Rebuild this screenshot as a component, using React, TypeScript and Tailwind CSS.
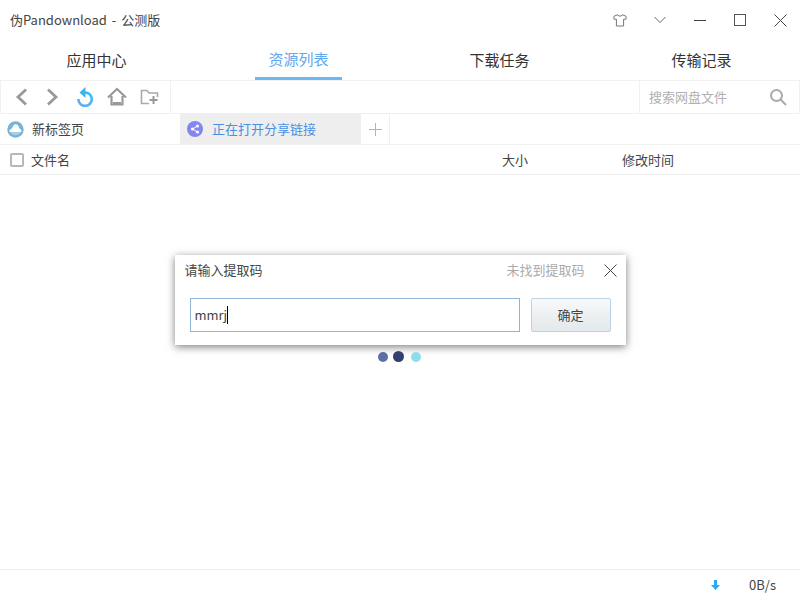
import React from "react";

function Tab({ label, active, className }: { label: string; active?: boolean; className?: string }) {
  return (
    <div className={`w-[87px] h-[40px] flex items-center justify-center text-[15px] ${active ? "text-[#60a8f0] border-b-[3px] border-[#6cb8f2] pt-[2px]" : "text-[#333]"} ${className ?? ""}`}>
      {label}
    </div>
  );
}

export default function App() {
  return (
    <div className="relative w-[800px] h-[600px] bg-white overflow-hidden text-[#333] font-['Noto_Sans_CJK_SC','Noto_Sans',sans-serif]">
      <div className="flex flex-col h-full">
        {/* Title bar */}
        <div className="h-[40px] flex items-center justify-between pl-[10px] shrink-0">
          <span className="text-[13px] text-[#444] [word-spacing:2px]">伪Pandownload - 公测版</span>
          <div className="flex items-center h-full">
            <div className="w-[40px] flex justify-center">
              <svg width="14" height="13" viewBox="0 0 14 13" fill="none" stroke="#777" strokeWidth="1">
                <path d="M4.8 0.8 L1 2.2 L0.9 5.2 L3.4 5.2 V12 H10.6 V5.2 L13.1 5.2 L13 2.2 L9.2 0.8 C8.8 2.6 5.2 2.6 4.8 0.8 Z" />
              </svg>
            </div>
            <div className="w-[40px] flex justify-center">
              <svg width="12" height="8" viewBox="0 0 12 8" fill="none" stroke="#666" strokeWidth="1"><path d="M0.5 1 L6 6.5 L11.5 1" /></svg>
            </div>
            <div className="w-[40px] flex justify-center">
              <div className="w-[12px] h-[1px] bg-[#444]" />
            </div>
            <div className="w-[40px] flex justify-center">
              <div className="w-[12px] h-[12px] border border-[#555]" />
            </div>
            <div className="w-[40px] flex justify-center">
              <svg width="13" height="13" viewBox="0 0 13 13" fill="none" stroke="#444" strokeWidth="1"><path d="M0.5 0.5 L12.5 12.5 M12.5 0.5 L0.5 12.5" /></svg>
            </div>
          </div>
        </div>

        {/* Main tabs */}
        <div className="h-[40px] flex shrink-0 pl-[53px]">
          <Tab label="应用中心" className="mr-[115px]" />
          <Tab label="资源列表" active className="mr-[114px]" />
          <Tab label="下载任务" className="mr-[115px]" />
          <Tab label="传输记录" />
        </div>

        {/* Toolbar */}
        <div className="h-[34px] flex items-stretch justify-between border-y border-[#f0f0f0] border-x shrink-0">
          <div className="w-[170px] border-r border-[#f0f0f0] flex items-center gap-[12px] pl-[10px]">
            <svg width="20" height="20" viewBox="0 0 20 20" fill="none" stroke="#999" strokeWidth="2.8"><path d="M15 2.5 L7 10 L15 17.5" /></svg>
            <svg width="20" height="20" viewBox="0 0 20 20" fill="none" stroke="#999" strokeWidth="2.8"><path d="M5 2.5 L13 10 L5 17.5" /></svg>
            <svg width="20" height="20" viewBox="0 0 20 20" fill="none">
              <defs>
                <linearGradient id="r" x1="0" y1="1" x2="1" y2="0">
                  <stop offset="0" stopColor="#6aa8f0" />
                  <stop offset="1" stopColor="#35c0f5" />
                </linearGradient>
              </defs>
              <path d="M10 5.5 A6.7 6.7 0 1 1 3.4 12" stroke="url(#r)" strokeWidth="2.6" />
              <path d="M10.5 0 L4.5 5.5 L10.5 11 Z" fill="#3fb2f2" />
            </svg>
            <svg width="20" height="20" viewBox="0 0 20 20" fill="none" stroke="#999" strokeWidth="2.2"><path d="M1 10.5 L10 2 L19 10.5 M4.5 9 V17.5 H15.5 V9" /><path d="M6 16.5 H14" strokeWidth="3" /></svg>
            <svg width="20" height="18" viewBox="0 0 20 18" fill="none" stroke="#aaa" strokeWidth="1.6"><path d="M10 15.5 H2.5 V2.5 H8 L10 5 H18.5 V9" /><path d="M14.5 8 V16 M10.5 12 H18.5" stroke="#999" strokeWidth="2" /></svg>
          </div>
          <div className="w-[160px] border-l border-[#f0f0f0] flex items-center justify-between pl-[9px] pr-[12px]">
            <span className="text-[13px] text-[#b0b0b0]">搜索网盘文件</span>
            <svg width="18" height="18" viewBox="0 0 18 18" fill="none" stroke="#aaa" strokeWidth="2"><circle cx="7.5" cy="7.5" r="5.5" /><path d="M11.5 11.5 L17 17" /></svg>
          </div>
        </div>

        {/* Page tabs */}
        <div className="h-[31px] flex border-b border-[#f0f0f0] shrink-0">
          <div className="w-[180px] flex items-center pl-[7px] gap-[8px]">
            <svg width="17" height="17" viewBox="0 0 17 17">
              <circle cx="8.5" cy="8.5" r="8.2" fill="#76b4d8" />
              <path d="M2.6 11 C2.2 8.8 3.8 7.6 5 7.6 C5.6 5.2 7 3.2 8.8 3.2 C10.8 3.2 12 5.4 12.2 7.6 C13.4 7.6 14.8 8.8 14.4 11 Z" fill="#fff" />
              <path d="M3.2 11 H13.8 C13 13 11 14.2 8.5 14.2 C6 14.2 4 13 3.2 11 Z" fill="#a9cfe3" />
            </svg>
            <span className="text-[13px] text-[#444]">新标签页</span>
          </div>
          <div className="w-[181px] bg-[#eeeeee] flex items-center pl-[7px] gap-[9px]">
            <svg width="16" height="16" viewBox="0 0 16 16">
              <circle cx="8" cy="8" r="8" fill="#8585f0" />
              <path d="M10.5 5 L5.5 8 L10.5 11" stroke="#fff" strokeWidth="1" fill="none" />
              <circle cx="10.5" cy="5" r="1.6" fill="#fff" />
              <circle cx="5.5" cy="8" r="1.6" fill="#fff" />
              <circle cx="10.5" cy="11" r="1.6" fill="#fff" />
            </svg>
            <span className="text-[13px] text-[#4a90e2]">正在打开分享链接</span>
          </div>
          <div className="w-[29px] border-r border-[#f0f0f0] flex items-center justify-center">
            <svg width="13" height="13" viewBox="0 0 13 13" stroke="#b5b5b5" strokeWidth="1"><path d="M6.5 0 V13 M0 6.5 H13" /></svg>
          </div>
        </div>

        {/* List header */}
        <div className="h-[30px] flex items-center border-b border-[#f0f0f0] shrink-0 text-[13px] text-[#444]">
          <div className="w-[502px] flex items-center pl-[10px] gap-[7px]">
            <div className="w-[14px] h-[14px] border-2 border-[#b8b8b8] rounded-[2px]" />
            <span>文件名</span>
          </div>
          <span className="w-[120px]">大小</span>
          <span>修改时间</span>
        </div>

        {/* Body with dialog */}
        <div className="flex-1 flex flex-col items-center pt-[80px]">
          <div className="w-[451px] h-[90px] bg-white shadow-[0_2px_8px_rgba(0,0,0,0.5)] flex flex-col">
            <div className="h-[30px] flex items-center justify-between pl-[10px] pr-[9px]">
              <span className="text-[13px] text-[#444]">请输入提取码</span>
              <div className="flex items-center gap-[19px]">
                <span className="text-[13px] text-[#aaa]">未找到提取码</span>
                <svg width="13" height="13" viewBox="0 0 13 13" fill="none" stroke="#444" strokeWidth="1"><path d="M0.5 0.5 L12.5 12.5 M12.5 0.5 L0.5 12.5" /></svg>
              </div>
            </div>
            <div className="flex items-center gap-[11px] pl-[15px] pt-[13px]">
              <div className="w-[330px] h-[34px] border border-[#8fb6d6] flex items-center pl-[4px] text-[13px] text-[#444]">
                mmrj<span className="w-[1px] h-[18px] bg-black" />
              </div>
              <div className="w-[80px] h-[34px] border border-[#bcd2e2] rounded-[2px] bg-gradient-to-b from-[#f8f9fa] to-[#e2e8ec] flex items-center justify-center text-[13px] text-[#444]">
                确定
              </div>
            </div>
          </div>
          <div className="flex items-center gap-[5px] mt-[6px] ml-[-2px]">
            <div className="w-[10px] h-[10px] rounded-full bg-[#5f6fa5]" />
            <div className="w-[11px] h-[11px] rounded-full bg-[#36406e]" />
            <div className="w-[10px] h-[10px] rounded-full bg-[#8fdcec] ml-[2px]" />
          </div>
        </div>

        {/* Status bar */}
        <div className="h-[31px] border-t border-[#f0f0f0] flex items-center justify-end pr-[24px] shrink-0">
          <svg width="9" height="10" viewBox="0 0 9 10" className="mr-[29px]">
            <path d="M3 0 H6 V5 H9 L4.5 10 L0 5 H3 Z" fill="#2aaaf0" />
          </svg>
          <span className="text-[13px] text-[#444]">0B/s</span>
        </div>
      </div>
    </div>
  );
}
